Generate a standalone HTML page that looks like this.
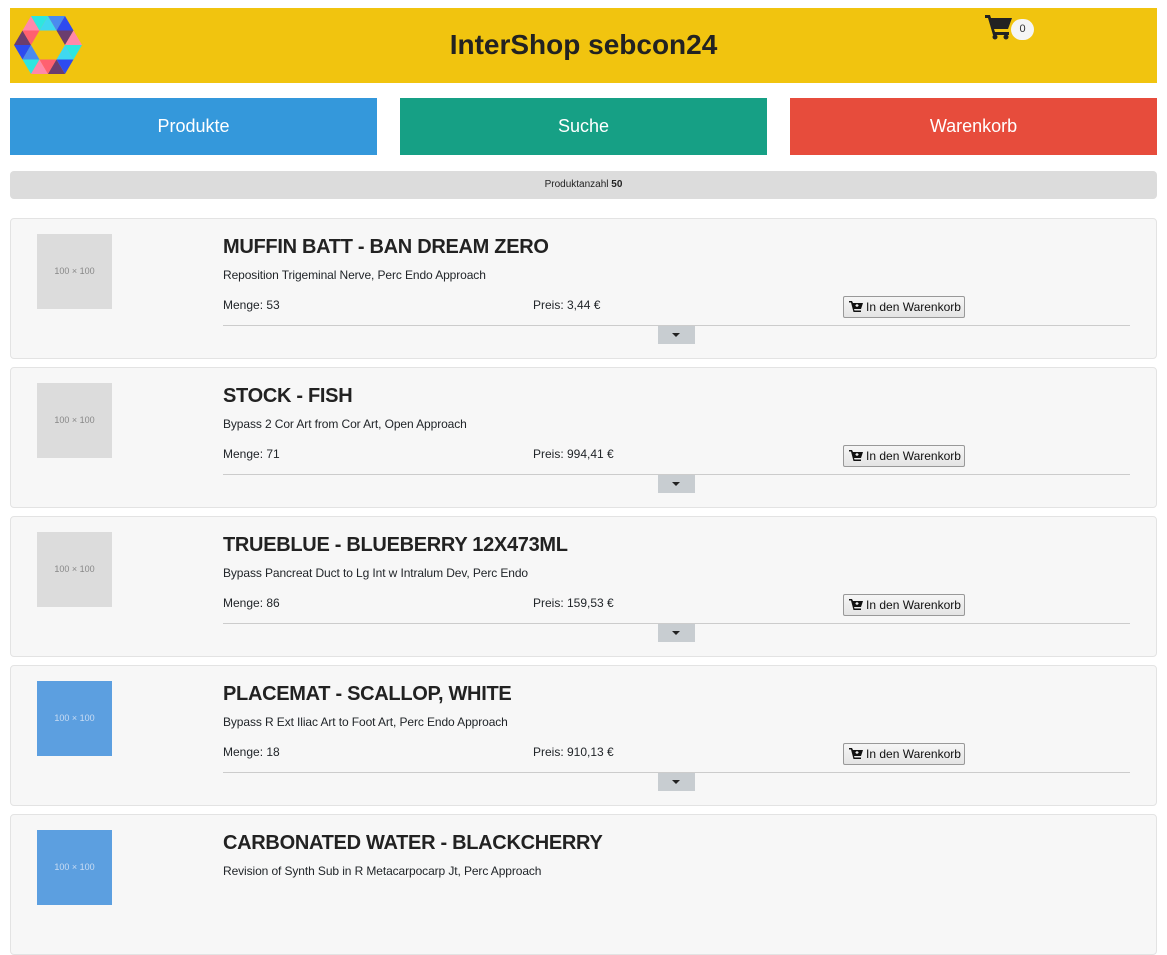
<!DOCTYPE html>
<html><head><meta charset="utf-8"><style>
*{box-sizing:border-box;margin:0;padding:0}
body{width:1167px;height:874px;overflow:hidden;background:#fff;font-family:"Liberation Sans",sans-serif;color:#212529;position:relative}
.abs{position:absolute}
.hdr{left:10px;top:8px;width:1147px;height:75px;background:#f1c40f}
.title{left:0;width:1167px;top:29px;text-align:center;font-size:28px;font-weight:bold;color:#222;letter-spacing:0px}
.nav{top:98px;height:57px;width:367px;color:#fff;font-size:18px;text-align:center;line-height:57px}
.bar{left:10px;top:171px;width:1147px;height:28px;background:#dcdcdc;border-radius:4px;font-size:10px;text-align:center;line-height:27px;color:#222}
.card{left:10px;width:1147px;height:141px;background:#f7f7f7;border:1px solid #e3e3e3;border-radius:4px}
.img{left:26px;top:15px;width:75px;height:75px;background:#dcdcdc;color:#888;font-size:9px;text-align:center;line-height:75px}
.img.b{background:#5c9fe0;color:#c9dcf3}
.h{left:212px;top:17px;font-size:20px;font-weight:bold;color:#222;white-space:nowrap;letter-spacing:-0.3px}
.d{left:212px;top:49px;font-size:12px;white-space:nowrap;letter-spacing:-0.1px}
.m{left:212px;top:79px;font-size:12px}
.p{left:522px;top:79px;font-size:12px}
.btn{left:832px;top:77px;width:122px;height:22px;border:1px solid #999;border-radius:2px;background:linear-gradient(#f6f6f6,#e4e4e4);font-size:12px;line-height:20px;padding-left:22px;color:#111}
.hr{left:212px;top:106px;width:907px;height:1px;background:#ccc}
.tg{left:647px;top:107px;width:37px;height:18px;background:#c8cdd1}
.tg:after{content:"";position:absolute;left:14px;top:7px;border-left:4px solid transparent;border-right:4px solid transparent;border-top:4px solid #222}
</style></head><body>
<div class="abs hdr"></div>
<svg class="abs" style="left:0;top:0" width="100" height="90">
<g>
<polygon points="31,16 22.5,30.5 39.5,30.5" fill="#ff88aa"/>
<polygon points="31,16 48,16 39.5,30.5" fill="#2ee6e0"/>
<polygon points="48,16 39.5,30.5 56.5,30.5" fill="#3fd8f0"/>
<polygon points="48,16 65,16 56.5,30.5" fill="#4a8af0"/>
<polygon points="65,16 56.5,30.5 73.5,30.5" fill="#2d4bf0"/>
<polygon points="22.5,30.5 14,45 31,45" fill="#6b3d6e"/>
<polygon points="22.5,30.5 39.5,30.5 31,45" fill="#ff6070"/>
<polygon points="56.5,30.5 73.5,30.5 65,45" fill="#6b3d6e"/>
<polygon points="73.5,30.5 65,45 82,45" fill="#ff88aa"/>
<polygon points="14,45 31,45 22.5,59.5" fill="#2d4bf0"/>
<polygon points="31,45 22.5,59.5 39.5,59.5" fill="#4a8af0"/>
<polygon points="65,45 56.5,59.5 73.5,59.5" fill="#3fd8f0"/>
<polygon points="65,45 82,45 73.5,59.5" fill="#2ee6e0"/>
<polygon points="22.5,59.5 39.5,59.5 31,74" fill="#2ee6e0"/>
<polygon points="39.5,59.5 31,74 48,74" fill="#ff88aa"/>
<polygon points="39.5,59.5 56.5,59.5 48,74" fill="#ff6070"/>
<polygon points="56.5,59.5 48,74 65,74" fill="#6b3d6e"/>
<polygon points="56.5,59.5 73.5,59.5 65,74" fill="#2d4bf0"/>
</g></svg>
<div class="abs title">InterShop sebcon24</div>
<svg class="abs" style="left:985px;top:14px" width="28" height="26" viewBox="0 0 28 26">
<path d="M0 1h5l1 3h21l-4 11H9l1 3h14v3H8L3 4H0z" fill="#222"/>
<circle cx="10" cy="23" r="2.5" fill="#222"/><circle cx="21" cy="23" r="2.5" fill="#222"/>
</svg>
<div class="abs" style="left:1011px;top:19px;width:23px;height:21px;border-radius:11px;background:#f5f5f5;font-size:11px;text-align:center;line-height:21px;color:#333">0</div>
<div class="abs nav" style="left:10px;background:#3498db">Produkte</div>
<div class="abs nav" style="left:400px;background:#16a085">Suche</div>
<div class="abs nav" style="left:790px;background:#e74c3c">Warenkorb</div>
<div class="abs bar">Produktanzahl <b>50</b></div>

<div class="abs card" style="top:218px"><div class="abs img">100 × 100</div><div class="abs h">MUFFIN BATT - BAN DREAM ZERO</div><div class="abs d">Reposition Trigeminal Nerve, Perc Endo Approach</div><div class="abs m">Menge: 53</div><div class="abs p">Preis: 3,44 €</div><div class="abs btn"><svg class="abs" style="left:5px;top:4px" width="14" height="12" viewBox="0 0 14 12"><path d="M0 0h3l1 2h10l-2 6H5l.5 1.5H12V11H4.5L2 1.5H0z" fill="#111"/><path d="M8 3v3M6.5 4.5h3" stroke="#eee" stroke-width="1.2"/></svg>In den Warenkorb</div><div class="abs hr"></div><div class="abs tg"></div></div>

<div class="abs card" style="top:367px"><div class="abs img">100 × 100</div><div class="abs h">STOCK - FISH</div><div class="abs d">Bypass 2 Cor Art from Cor Art, Open Approach</div><div class="abs m">Menge: 71</div><div class="abs p">Preis: 994,41 €</div><div class="abs btn"><svg class="abs" style="left:5px;top:4px" width="14" height="12" viewBox="0 0 14 12"><path d="M0 0h3l1 2h10l-2 6H5l.5 1.5H12V11H4.5L2 1.5H0z" fill="#111"/><path d="M8 3v3M6.5 4.5h3" stroke="#eee" stroke-width="1.2"/></svg>In den Warenkorb</div><div class="abs hr"></div><div class="abs tg"></div></div>

<div class="abs card" style="top:516px"><div class="abs img">100 × 100</div><div class="abs h">TRUEBLUE - BLUEBERRY 12X473ML</div><div class="abs d">Bypass Pancreat Duct to Lg Int w Intralum Dev, Perc Endo</div><div class="abs m">Menge: 86</div><div class="abs p">Preis: 159,53 €</div><div class="abs btn"><svg class="abs" style="left:5px;top:4px" width="14" height="12" viewBox="0 0 14 12"><path d="M0 0h3l1 2h10l-2 6H5l.5 1.5H12V11H4.5L2 1.5H0z" fill="#111"/><path d="M8 3v3M6.5 4.5h3" stroke="#eee" stroke-width="1.2"/></svg>In den Warenkorb</div><div class="abs hr"></div><div class="abs tg"></div></div>

<div class="abs card" style="top:665px"><div class="abs img b">100 × 100</div><div class="abs h">PLACEMAT - SCALLOP, WHITE</div><div class="abs d">Bypass R Ext Iliac Art to Foot Art, Perc Endo Approach</div><div class="abs m">Menge: 18</div><div class="abs p">Preis: 910,13 €</div><div class="abs btn"><svg class="abs" style="left:5px;top:4px" width="14" height="12" viewBox="0 0 14 12"><path d="M0 0h3l1 2h10l-2 6H5l.5 1.5H12V11H4.5L2 1.5H0z" fill="#111"/><path d="M8 3v3M6.5 4.5h3" stroke="#eee" stroke-width="1.2"/></svg>In den Warenkorb</div><div class="abs hr"></div><div class="abs tg"></div></div>

<div class="abs card" style="top:814px"><div class="abs img b">100 × 100</div><div class="abs h">CARBONATED WATER - BLACKCHERRY</div><div class="abs d">Revision of Synth Sub in R Metacarpocarp Jt, Perc Approach</div></div>
</body></html>
